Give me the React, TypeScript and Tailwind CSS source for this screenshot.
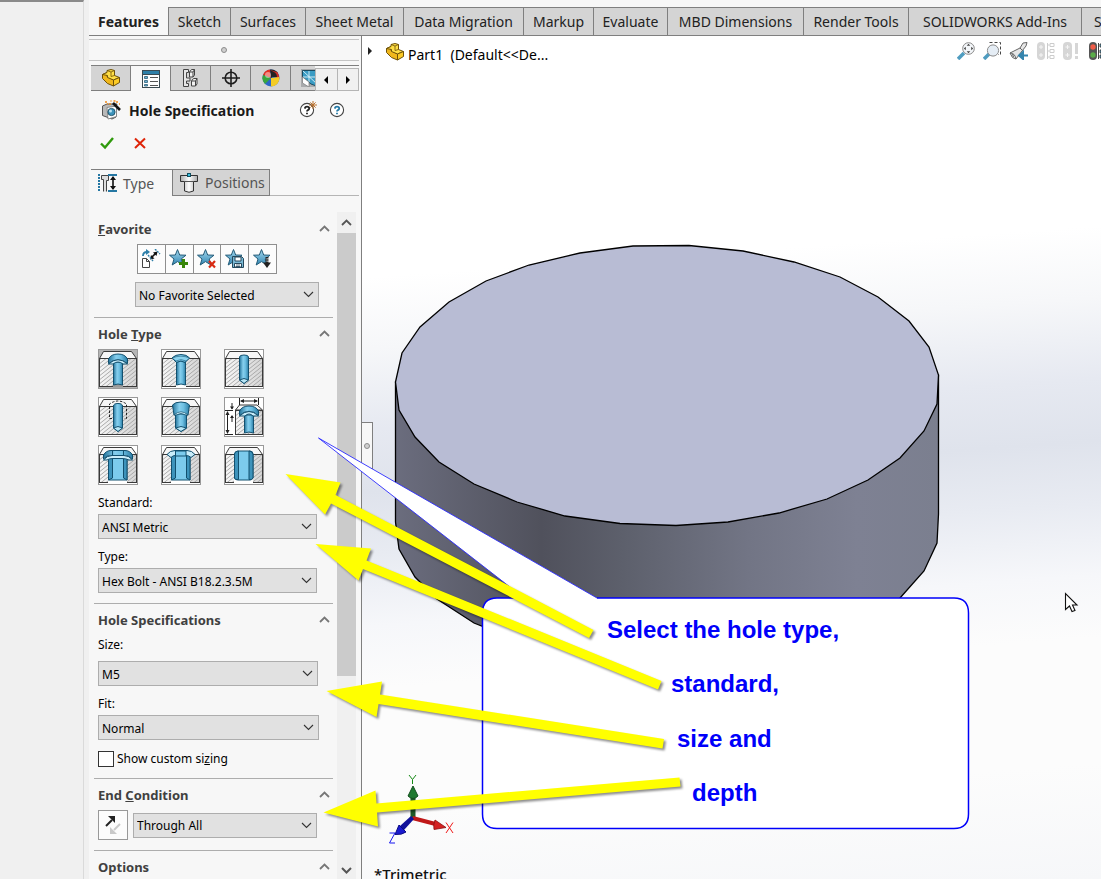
import { useState } from "react";
import type { ReactNode } from "react";

const commandTabs = [
  { label: "Features", width: "w-20" },
  { label: "Sketch", width: "w-[62px]" },
  { label: "Surfaces", width: "w-[75px]" },
  { label: "Sheet Metal", width: "w-[98px]" },
  { label: "Data Migration", width: "w-[120px]" },
  { label: "Markup", width: "w-[70px]" },
  { label: "Evaluate", width: "w-[74px]" },
  { label: "MBD Dimensions", width: "w-[136px]" },
  { label: "Render Tools", width: "w-[105px]" },
  { label: "SOLIDWORKS Add-Ins", width: "w-[173px]" },
];

function PartIcon() {
  return (
    <svg width="18" height="18" viewBox="0 0 18 18" aria-hidden="true">
      <path d="M0.500 5.500 L5 3.500 V7.500 L11.500 11 V17 L5.500 14.500 L0.500 9.500 Z" fill="#f0b71c" stroke="#6f5208" strokeLinejoin="round" />
      <path d="M0.500 5.500 L5 3.500 V1.500 L9 0.500 L12.500 1.500 V6.500 L17.500 8.500 L11.500 11 L5.500 8.500 V6.500 Z" fill="#ffdf45" stroke="#6f5208" strokeLinejoin="round" />
      <path d="M5 1.500 L9 3 L12.500 1.500 M9 3 V7.500 L12.500 6.500" fill="none" stroke="#6f5208" strokeWidth="0.800" />
      <path d="M11.500 11 L17.500 8.500 V13.500 L11.500 17 Z" fill="#fccb25" stroke="#6f5208" strokeLinejoin="round" />
    </svg>
  );
}

function PropertyIcon() {
  return (
    <svg width="18" height="18" viewBox="0 0 18 18" aria-hidden="true">
      <rect x="0.500" y="0.500" width="17" height="17" fill="#fff" stroke="#3a4a52" />
      <rect x="1" y="1" width="16" height="3" fill="#2d7fa8" />
      <path d="M0 4.500H18" stroke="#3a4a52" />
      <path d="M2.500 6.500h3v2h-3zM2.500 10.500h3v2h-3zM2.500 14.500h3v1.500h-3z" fill="#6db3d3" stroke="#2d5f78" strokeWidth="0.800" />
      <path d="M8 7.500h8M8 11.500h8M8 15.500h8" stroke="#555" />
    </svg>
  );
}

function ConfigIcon() {
  return (
    <svg width="18" height="18" viewBox="0 0 18 18" fill="none" stroke="#444" aria-hidden="true">
      <path d="M1.500 0.500 H6.500 V3.500 H4.500 V9 H8 V12 H4.500 V14.500 H6.500 V17.500 H1.500 Z" fill="#e6e6e6" />
      <path d="M7.500 3 L9.500 0.500 H12.500 V6 L11 8 H7.500Z M7.500 3H11V8 M11 3l1.500-2.500" fill="#f2f2f2" />
      <path d="M9.500 12 L11.500 9.500 H15 V15 L13.500 17 H9.500Z M9.500 12H13.500V17 M13.500 12l1.500-2.500" fill="#f2f2f2" />
    </svg>
  );
}

function TargetIcon() {
  return (
    <svg width="18" height="18" viewBox="0 0 18 18" fill="none" stroke="#1d1d1d" strokeWidth="1.600" aria-hidden="true">
      <circle cx="9" cy="9" r="5.800" />
      <path d="M9 0V18M0 9H18" />
    </svg>
  );
}

function BallIcon() {
  return (
    <svg width="18" height="18" viewBox="0 0 18 18" aria-hidden="true">
      <circle cx="9" cy="9" r="8.500" fill="#2c66c8" />
      <path d="M9 9 L1 6 A8.5 8.5 0 0 1 8 0.600 Z" fill="#e33022" />
      <path d="M9 9 L8 0.600 A8.5 8.5 0 0 1 16 4 Z" fill="#222" />
      <path d="M8 1 Q13 3 13 8 L17 10 A8.5 8.5 0 0 0 15 3 Z" fill="#cf2a22" />
      <path d="M9 2 Q15 3 15 8 L11 8Z" fill="#222" />
      <path d="M9 9 L17.400 8 A8.5 8.5 0 0 1 9 17.500 Z" fill="#f4cc25" />
      <path d="M9 9 L1 6 A8.5 8.5 0 0 0 3 15 Z" fill="#38a63d" />
      <circle cx="6" cy="6" r="3" fill="#fff" opacity="0.450" />
    </svg>
  );
}

function BlueprintIcon() {
  return (
    <svg width="18" height="18" viewBox="0 0 18 18" className="shrink-0" aria-hidden="true">
      <rect width="18" height="18" fill="#a9abad" />
      <path d="M1.500 1.500 H18 V18 L10 15 L1.500 8 Z" fill="#3a9cc4" stroke="#1b4b61" />
      <path d="M2 2 L16 15 M8 2 V13 M2 8 H18" stroke="#dff3fa" strokeWidth="0.900" />
      <path d="M1.500 8 L8 13 V18 L1.500 14Z" fill="#fff" stroke="#777" strokeWidth="0.700" />
    </svg>
  );
}

function HoleWizardIcon() {
  return (
    <svg width="20" height="20" viewBox="0 0 20 20" aria-hidden="true">
      <path d="M1.500 6 L6 4 H16 L15 7 V17 L11 19 L1.500 15.500 Z" fill="#b9b9b9" stroke="#555" />
      <path d="M6 7.500 L15.500 6 V16.500 L7 19 Z" fill="#fff" stroke="#777" strokeWidth="0.800" />
      <circle cx="10.500" cy="12" r="3.600" fill="#3c93bb" stroke="#24586f" />
      <circle cx="9.500" cy="11" r="1.500" fill="#b8e2f2" />
      <path d="M12 3 L19 10" stroke="#151515" strokeWidth="2.600" />
      <path d="M4 2h2M8 4h2M12.500 1h2M16 1v2M9.500 1h1M6 4h1M18 4h1" stroke="#f08a1c" strokeWidth="1.500" />
    </svg>
  );
}

function HelpIcon({ starred }: { starred?: boolean }) {
  return (
    <svg width="18" height="18" viewBox="0 0 18 18" className="overflow-visible" aria-hidden="true">
      <circle cx="8" cy="9" r="6.600" fill="#fff" stroke="#444" strokeWidth="1.100" />
      <path d="M5.900 7.600 Q6 5.600 8 5.600 Q10.200 5.600 10.200 7.400 Q10.200 8.400 8.900 9.100 Q8 9.600 8 10.600 M8 11.800 V13.300" fill="none" stroke={starred ? "#222" : "#2579a5"} strokeWidth="1.800" />
      {starred && <path d="M14 0V8M10 4H18M11.400 1.400L16.600 6.600M16.600 1.400L11.400 6.600" stroke="#b9702c" />}
    </svg>
  );
}

function TypeTabIcon() {
  return (
    <svg width="20" height="20" viewBox="0 0 20 20" aria-hidden="true">
      <path d="M2 1 V19" stroke="#2577a3" strokeWidth="2" strokeDasharray="2 1" />
      <path d="M6.500 18.500 V6.500 H4.500 V2.500 H11.500 V7.500 H9.500 V18.500" fill="#ddd" stroke="#444" />
      <path d="M11 2 H20 M11 18 H20" stroke="#2577a3" strokeWidth="2" />
      <path d="M16 4 V16" stroke="#111" strokeWidth="1.600" />
      <path d="M13 7 L16 3 L19 7Z M13 13 L16 17 L19 13Z" fill="#111" />
    </svg>
  );
}

function PositionsTabIcon() {
  return (
    <svg width="20" height="20" viewBox="0 0 20 20" aria-hidden="true">
      <path d="M1.500 2.500 H18.500 V8.500 H14.500 V18 Q10 20.500 5.500 18 V8.500 H1.500 Z" fill="url(#metal)" stroke="#333" />
      <path d="M5.500 8.500 H14.500" stroke="#555" />
      <rect x="8.500" y="0.500" width="3" height="3" fill="#3cc0dc" stroke="#124e60" />
    </svg>
  );
}

function FavoriteIcon({ kind }: { kind: "apply" | "add" | "delete" | "save" | "load" }) {
  if (kind === "apply") {
    return (
      <svg width="20" height="20" viewBox="0 0 20 20" aria-hidden="true">
        <path d="M1.500 9.500 H5.500 L8.500 12.500 V18.500 H1.500 Z M5.500 9.500 V12.500 H8.500" fill="#fff" stroke="#444" />
        <path d="M2 7 Q2 3 6 3" fill="none" stroke="#2e7fa9" strokeWidth="1.800" />
        <path d="M5 0 L9 3 L5 6Z" fill="#2e7fa9" />
        <path d="M10 9 L15 4" stroke="#111" strokeWidth="1.600" />
        <path d="M9 10.500 L10 6 L13.500 9.500Z M16.500 2.500 L12 3.500 L15.500 7Z" fill="#111" />
        <path d="M7 6 L12 12 M14 0 L19 5" stroke="#2e7fa9" strokeWidth="1.400" strokeDasharray="2 1" />
      </svg>
    );
  }
  return (
    <svg width="20" height="20" viewBox="0 0 20 20" aria-hidden="true">
      <path d="M8.500 0.500 L10.700 6 L17 6.200 L12.200 10 L14 16 L8.500 12.600 L3.200 16 L5 10 L0.500 6.200 L6.300 6 Z" fill="url(#star)" stroke="#235b78" strokeWidth="1" />
      {kind === "add" && <path d="M14.500 10 V19 M10 14.500 H19" stroke="#38860a" strokeWidth="3" />}
      {kind === "delete" && <path d="M12 12 L18 18.500 M18 12 L12 18.500" stroke="#d92a12" strokeWidth="2.200" />}
      {kind === "save" && (
        <g>
          <path d="M7.500 7.500 H16.500 L18.500 9.500 V18.500 H7.500 Z" fill="#7ab9d5" stroke="#26485c" />
          <path d="M10 8 H16 V12 H10Z M9.500 14.500 H16.500 V18 H9.500Z" fill="#fff" stroke="#26485c" />
          <path d="M11 16h4M11 17.500h4" stroke="#26485c" strokeWidth="0.800" />
        </g>
      )}
      {kind === "load" && (
        <g>
          <path d="M14 8 V14" stroke="#222" strokeWidth="3" strokeDasharray="1.5 0.800" />
          <path d="M10 13.500 H18 L14 19Z" fill="#222" />
        </g>
      )}
    </svg>
  );
}

type HoleKind = "cbore" | "csink" | "hole" | "tap" | "pipe" | "legacy" | "cboreSlot" | "csinkSlot" | "slot";

const holeKinds: { kind: HoleKind; label: string }[] = [
  { kind: "cbore", label: "Counterbore" },
  { kind: "csink", label: "Countersink" },
  { kind: "hole", label: "Hole" },
  { kind: "tap", label: "Straight Tap" },
  { kind: "pipe", label: "Tapered Tap" },
  { kind: "legacy", label: "Legacy Hole" },
  { kind: "cboreSlot", label: "Counterbore Slot" },
  { kind: "csinkSlot", label: "Countersink Slot" },
  { kind: "slot", label: "Slot" },
];

function Block() {
  return (
    <g>
      <path d="M1.500 9.500 L5.500 2.500 H33.500 L38.500 9.500 Z" fill="#f7f7f7" stroke="#3a3a3a" />
      <rect x="1.500" y="9.500" width="37" height="28" fill="url(#steel)" stroke="none" />
      <rect x="1.500" y="9.500" width="37" height="28" fill="url(#hatch)" stroke="#3a3a3a" />
    </g>
  );
}

function HoleShape({ kind }: { kind: HoleKind }) {
  const edge = "#12506f";
  switch (kind) {
    case "cbore":
      return (
        <g stroke={edge}>
          <Block />
          <path d="M15 38.500 V36 Q19.500 33 25 36 V38.500Z" fill="#9a9a9a" stroke="none" />
          <path d="M15.500 13 H24.500 V36 Q20 34 15.500 36Z" fill="url(#bore)" />
          <path d="M10.500 14.500 V10 Q13 5 20 5 T29.500 10 V14.500 Q20 7 10.500 14.500Z" fill="url(#bore)" />
          <path d="M10.500 15 Q20 6.500 29.500 15 L25 15 Q20 11 15 15Z" fill="#c9edfa" />
        </g>
      );
    case "csink":
      return (
        <g stroke={edge}>
          <Block />
          <path d="M15 38.500 V36 Q19.500 33 25 36 V38.500Z" fill="#fff" stroke="none" />
          <path d="M15.500 12 H24.500 V36 Q20 34 15.500 36Z" fill="url(#bore)" />
          <path d="M11 9 Q14 5.500 20 5.500 T28.500 9 L24 13.500 Q20 10.500 15.500 13.500Z" fill="url(#bore)" />
          <path d="M11 9 Q20 5.500 28.500 9 L25 12 Q20 9 15 12Z" fill="#8bd3ef" strokeWidth="0.500" />
        </g>
      );
    case "hole":
      return (
        <g stroke={edge}>
          <Block />
          <path d="M15.500 8 Q15.500 6 20 6 T24.500 8 V31 L20 34.500 L15.500 31Z" fill="url(#bore)" />
          <path d="M15.500 31 Q20 28 24.500 31 L20 34.500Z" fill="#b8e6f6" />
        </g>
      );
    case "tap":
      return (
        <g stroke={edge}>
          <Block />
          <path d="M15.500 9 Q15.500 6.500 20 6.500 T24.500 9 V31 L20 34.500 L15.500 31Z" fill="url(#bore)" />
          <path d="M15.500 31 Q20 28 24.500 31 L20 34.500Z" fill="#b8e6f6" />
          <path d="M14 21.500 H11.500 V7 Q20 1 28.500 7 V21.500 H26" fill="none" stroke="#222" strokeDasharray="2.500 1.500" />
        </g>
      );
    case "pipe":
      return (
        <g stroke={edge}>
          <Block />
          <path d="M14.500 17 H25.500 V31 L20 34.500 L14.500 31Z" fill="url(#bore)" />
          <path d="M14.500 31 Q20 28 25.500 31 L20 34.500Z" fill="#b8e6f6" />
          <path d="M11.500 8 Q14 5 20 5 T28.500 8 L27 18 Q20 14 13 18Z" fill="url(#bore)" />
          <path d="M13 18 Q20 11.500 27 18 L25 18 Q20 15 15 18Z" fill="#c9edfa" strokeWidth="0.700" />
        </g>
      );
    case "legacy":
      return (
        <g stroke={edge}>
          <path d="M11.500 13 L15.500 8 H33 L38.500 13Z" fill="#f7f7f7" stroke="#3a3a3a" />
          <rect x="11.500" y="13.500" width="27" height="24" fill="url(#steel)" stroke="none" />
          <rect x="11.500" y="13.500" width="27" height="24" fill="url(#hatch)" stroke="#3a3a3a" />
          <path d="M20.500 18 H29.500 V36 Q25 34 20.500 36Z" fill="url(#bore)" />
          <path d="M15.500 18.500 V14 Q18 9 25 9 T34.500 14 V18.500 Q25 10 15.500 18.500Z" fill="url(#bore)" />
          <path d="M15.500 19 Q25 10 34.500 19 H29 Q25 15 21 19Z" fill="#c9edfa" />
          <path d="M15.500 1 V8 M34.500 1 V8 M17 4 H33 M1 13.500 H9 M1 37.500 H9 M3.500 16 V35 M8 6 V12 M8 19 V25" stroke="#222" fill="none" />
          <path d="M16 4l4-2v4zM34 4l-4-2v4zM3.500 14l-2 4h4zM3.500 37l-2-4h4zM8 12.500l-2-3h4zM8 18l-2 3h4z" fill="#222" stroke="none" />
        </g>
      );
    case "cboreSlot":
      return (
        <g stroke={edge}>
          <Block />
          <rect x="10" y="35" width="19" height="4" fill="#fff" stroke="none" />
          <path d="M10.500 12 H29 V35 H10.500Z" fill="#7ccbed" />
          <path d="M10.500 12 H14.500 V33 L10.500 35Z M29 12 H25.500 V33 L29 35Z" fill="#3d93bb" />
          <path d="M5.500 14 V10 Q8 5.500 13 5.500 H27 Q32 5.500 34.500 10 V14 Q30 10 26 10.500 H14 Q9 10 5.500 14Z" fill="url(#bore)" />
          <path d="M5.500 15 Q9 10.500 14 10.500 H26 Q31 10.500 34.500 15 H31 Q28 13.500 24 13.500 H15 Q11 13.500 9 15Z" fill="#c9edfa" />
          <path d="M14.500 6 V11 M25.500 6 V11" />
        </g>
      );
    case "csinkSlot":
      return (
        <g stroke={edge}>
          <Block />
          <rect x="10" y="35" width="19" height="4" fill="#fff" stroke="none" />
          <path d="M10.500 10 H29 V35 H10.500Z" fill="#7ccbed" />
          <path d="M10.500 10 H14.500 V33 L10.500 35Z M29 10 H25.500 V33 L29 35Z" fill="#3d93bb" />
          <path d="M6 9.500 Q9 5.500 14 5.500 H26 Q31 5.500 34 9.500 L30 12.500 Q28 10.500 25 10.500 H14 Q12 10.500 10 12.500Z" fill="#c9edfa" />
          <path d="M14.500 6 H25 V11 H14.500Z" fill="#7ccbed" />
        </g>
      );
    default:
      return (
        <g stroke={edge}>
          <Block />
          <rect x="10" y="35" width="19" height="4" fill="#fff" stroke="none" />
          <path d="M10.500 9 Q11 6 14 6 H26 Q29 6 29 9 V33 Q28 35 26 35 H14 Q11 35 10.500 33Z" fill="#7ccbed" />
          <path d="M10.500 9 Q11 6 14.500 6 V34.500 Q11 35 10.500 33Z M29 9 Q28 6 25 6 V34.500 Q28 35 29 33Z" fill="#3d93bb" />
        </g>
      );
  }
}

function Chevron({ dir, className }: { dir: "up" | "down"; className?: string }) {
  return (
    <svg width="11" height="7" viewBox="0 0 11 7" fill="none" className={className} aria-hidden="true">
      <path d={dir === "up" ? "M1 6L5.500 1.500L10 6" : "M1 1L5.500 5.500L10 1"} stroke="currentColor" strokeWidth={dir === "up" ? "1.8" : "1.1"} />
    </svg>
  );
}

function Dropdown({ id, label, value, className }: { id: string; label?: string; value: string; className: string }) {
  return (
    <div className={`relative ${className}`}>
      <select
        id={id}
        aria-label={label}
        className="block h-[25px] w-full appearance-none border border-[#adadad] bg-[#e1e1e1] pl-[3px] pr-6 pt-[2px] text-[12px] text-black"
      >
        <option>{value}</option>
      </select>
      <Chevron dir="down" className="pointer-events-none absolute right-[5px] top-[9px] text-[#333]" />
    </div>
  );
}

function Group({ title, children, className = "" }: { title: ReactNode; children?: ReactNode; className?: string }) {
  const [open, setOpen] = useState(true);
  return (
    <section className={`border-[#adadad] pl-1 ${className}`}>
      <button
        type="button"
        aria-expanded={open}
        onClick={() => setOpen(!open)}
        className="flex h-6 w-full items-center justify-between pr-[3px] text-[13px] font-bold text-[#404040]"
      >
        <span>{title}</span>
        <Chevron dir="up" className="mb-1 text-[#777]" />
      </button>
      {open && children}
    </section>
  );
}

function ManagerTabs() {
  const tabs = [
    { name: "Feature tree", icon: <PartIcon /> },
    { name: "Properties", icon: <PropertyIcon /> },
    { name: "Configurations", icon: <ConfigIcon /> },
    { name: "Dimension expert", icon: <TargetIcon /> },
    { name: "Display", icon: <BallIcon /> },
  ];
  return (
    <div className="mx-[2px] mt-1 flex h-[26px] border-t border-[#7f7f7f]">
      {tabs.map((tab, i) => (
        <button
          key={tab.name}
          type="button"
          aria-label={tab.name}
          className={`flex w-10 shrink-0 items-center justify-center border-r border-[#7f7f7f] ${i === 1 ? "bg-[#f7f7f7]" : "border-b bg-[#d4d4d4]"}`}
        >
          {tab.icon}
        </button>
      ))}
      <button type="button" aria-label="Drawings" className="flex w-6 shrink-0 items-center overflow-hidden border-b border-[#7f7f7f] bg-[#d4d4d4] pl-[10px]">
        <BlueprintIcon />
      </button>
      <button type="button" aria-label="Previous tabs" className="mt-[2px] flex min-w-0 flex-1 items-center justify-center border border-[#b5b5b5] bg-[#f0f0f0]">
        <svg width="6" height="8" viewBox="0 0 6 8"><path d="M5 0V8L1 4Z" /></svg>
      </button>
      <button type="button" aria-label="Next tabs" className="mt-[2px] flex min-w-0 flex-1 items-center justify-center border border-l-0 border-[#b5b5b5] bg-[#f0f0f0]">
        <svg width="6" height="8" viewBox="0 0 6 8"><path d="M1 0V8L5 4Z" /></svg>
      </button>
    </div>
  );
}

function PropertyPanel() {
  return (
    <aside className="flex w-[272px] shrink-0 flex-col bg-[#f7f7f7]">
      <div className="mt-[3px] mr-[2px] flex h-[22px] items-center justify-center border-y border-[#c4c4c4]">
        <span className="size-[6px] rounded-full border border-[#8c8c8c] bg-[#d0d0d0]" />
      </div>
      <ManagerTabs />
      <header className="flex h-[38px] items-center pl-3 pr-[14px]">
        <HoleWizardIcon />
        <h1 className="ml-2 flex-1 text-[14px] font-bold text-[#1a1a1a]">Hole Specification</h1>
        <div className="flex gap-3">
          <button type="button" aria-label="What's new"><HelpIcon starred /></button>
          <button type="button" aria-label="Help"><HelpIcon /></button>
        </div>
      </header>
      <div className="flex h-10 items-start gap-5 pl-[11px] pt-[7px]">
        <button type="button" aria-label="OK">
          <svg width="14" height="14" viewBox="0 0 14 14" fill="none"><path d="M1 7.500L5 11.500L13 2" stroke="#2f9a0c" strokeWidth="2.400" /></svg>
        </button>
        <button type="button" aria-label="Cancel">
          <svg width="12" height="14" viewBox="0 0 12 14" fill="none"><path d="M1 2.500L11 12M11 2.500L1 12" stroke="#de2408" strokeWidth="2" /></svg>
        </button>
      </div>
      <div className="ml-[2px] mr-[2px] flex h-[27px] text-[14px] text-[#555]">
        <button type="button" className="flex w-[81px] items-center gap-[6px] border-t border-[#7f7f7f] pl-[6px]">
          <TypeTabIcon />
          <span>Type</span>
        </button>
        <button type="button" className="flex w-[98px] items-center gap-[6px] border border-[#7f7f7f] bg-[#d4d4d4] pl-[6px]">
          <PositionsTabIcon />
          <span>Positions</span>
        </button>
        <span className="flex-1 border-b border-[#b5b5b5]" />
      </div>
      <div className="mt-4 flex min-h-0 flex-1">
        <div className="ml-[5px] w-[239px] overflow-hidden pt-[6px]">
          <Group title={<><u>F</u>avorite</>} className="h-[99px]">
            <div className="ml-[39px] mt-[2px] flex w-[140px] border border-[#8f8f8f]">
              {(["apply", "add", "delete", "save", "load"] as const).map((kind, i) => (
                <button
                  key={kind}
                  type="button"
                  aria-label={`${kind} favorite`}
                  className={`flex h-7 flex-1 items-center justify-center bg-[#fcfcfc] ${i > 0 ? "border-l border-[#8f8f8f]" : ""}`}
                >
                  <FavoriteIcon kind={kind} />
                </button>
              ))}
            </div>
            <Dropdown id="favorite" label="Favorite" value="No Favorite Selected" className="ml-[37px] mt-2 w-[184px]" />
          </Group>

          <Group title={<>Hole <u>T</u>ype</>} className="h-[286px] border-t pt-[5px]">
            <div className="mt-[2px] grid grid-cols-[40px_40px_40px] gap-x-[23px] gap-y-2">
              {holeKinds.map(({ kind, label }) => (
                <button key={kind} type="button" aria-label={label} className={`size-10 border border-[#999] ${kind === "cbore" ? "bg-[#b5b5b5]" : "bg-white"}`}>
                  <svg viewBox="1 1 38 38" className="size-full" aria-hidden="true">
                    <HoleShape kind={kind} />
                  </svg>
                </button>
              ))}
            </div>
            <label htmlFor="standard" className="mt-2 block h-[21px] text-[12px] leading-5">Standard:</label>
            <Dropdown id="standard" value="ANSI Metric" className="w-[219px]" />
            <label htmlFor="type" className="mt-2 block h-[21px] text-[12px] leading-5">Type:</label>
            <Dropdown id="type" value="Hex Bolt - ANSI B18.2.3.5M" className="w-[219px]" />
          </Group>

          <Group title="Hole Specifications" className="h-[175px] border-t pt-[5px]">
            <label htmlFor="size" className="mt-[2px] block h-[26px] text-[12px] leading-5">Size:</label>
            <Dropdown id="size" value="M5" className="w-[220px]" />
            <label htmlFor="fit" className="mt-2 block h-[21px] text-[12px] leading-5">Fit:</label>
            <Dropdown id="fit" value="Normal" className="w-[221px]" />
            <label className="mt-2 flex h-[22px] items-center gap-[3px] text-[12px]">
              <input type="checkbox" className="size-4 appearance-none border border-[#333] bg-white checked:bg-[#333]" />
              <span>Show custom si<u>z</u>ing</span>
            </label>
          </Group>

          <Group title={<>End <u>C</u>ondition</>} className="h-[72px] border-t pt-[5px]">
            <div className="mt-[2px] flex items-center gap-[5px]">
              <button type="button" aria-label="Reverse direction" className="flex size-[30px] items-center justify-center border border-[#999] bg-[#fcfcfc]">
                <svg width="20" height="20" viewBox="0 0 20 20">
                  <path d="M3 11 L9 5" stroke="#222" strokeWidth="2" />
                  <path d="M5 1 H12 V8Z" fill="#222" />
                  <path d="M17 9 L11 15" stroke="#c9c9c9" strokeWidth="2" />
                  <path d="M7 12 V19 H14Z" fill="#c9c9c9" />
                </svg>
              </button>
              <Dropdown id="end" label="End condition" value="Through All" className="w-[184px]" />
            </div>
          </Group>

          <Group title="Options" className="border-t pt-[5px]" />
        </div>
        <div className="ml-1 flex w-[19px] flex-col items-center bg-[#f0f0f0]">
          <div className="flex h-[21px] items-center"><Chevron dir="up" className="text-[#555]" /></div>
          <div className="h-[443px] w-full bg-[#cbcbcb]" />
          <div className="mt-auto flex h-[18px] items-center">
            <svg width="11" height="7" viewBox="0 0 11 7" fill="none"><path d="M1 1L5.500 5.500L10 1" stroke="#555" strokeWidth="2" /></svg>
          </div>
        </div>
      </div>
    </aside>
  );
}

function ViewIcons() {
  return (
    <div className="flex gap-2">
      <svg width="18" height="18" viewBox="0 0 18 18">
        <path d="M1 17 L7 11" stroke="#4f9cc0" strokeWidth="3.500" />
        <circle cx="11.500" cy="6.500" r="5.800" fill="#f4f7fa" stroke="#888" />
        <path d="M11.500 1.800l1.800 2h-3.600zM11.500 11.200l1.800-2h-3.600zM6.800 6.500l2-1.800v3.600zM16.200 6.500l-2-1.800v3.600z" fill="#444" />
      </svg>
      <svg width="18" height="18" viewBox="0 0 18 18">
        <path d="M1 17 L6 12" stroke="#4f9cc0" strokeWidth="3.500" />
        <path d="M6.500 0.500 H17.500 V12.500 H15" fill="none" stroke="#444" strokeDasharray="3 2" />
        <circle cx="10" cy="8.500" r="5.600" fill="#e5edf5" stroke="#8b8b8b" />
      </svg>
      <svg width="20" height="18" viewBox="0 0 20 18">
        <path d="M1 11 L11 6 L14 1 L18 0.500 L17 4 L13 9 L7 17 Q3 17 1 11Z" fill="#e6e6e6" stroke="#666" />
        <path d="M1 11 Q6 11 7 17 M3.500 12 L4.500 15 M11 6 L13.500 8.500" fill="none" stroke="#666" />
        <path d="M19 13.500 H13 M14 10 L10 13.500 L14 17Z" fill="#3484ad" stroke="#3484ad" strokeWidth="2" />
      </svg>
      <svg width="18" height="18" viewBox="0 0 18 18">
        <rect x="0" y="0" width="8" height="18" rx="4" fill="#d6d6d6" />
        <path d="M4 3v4M2 5h4M4 11v4M2 13h4" stroke="#f5f5f5" />
        <path d="M10.500 1v16M13 1.500h4v3h-4zM13 7.500h4v3h-4zM13 13.500h4v3h-4zM10.500 3h2M10.500 9h2M10.500 15h2" fill="none" stroke="#ccc" />
      </svg>
      <svg width="18" height="18" viewBox="0 0 18 18">
        <rect x="0" y="0" width="9" height="18" rx="4" fill="#d6d6d6" />
        <path d="M4.500 3v4M2.500 5h4M4.500 11v4M2.500 13h4" stroke="#f5f5f5" />
        <path d="M12 1h3v11h-3zM12 14h3v3h-3z" fill="#d6d6d6" />
      </svg>
      <svg width="18" height="18" viewBox="0 0 18 18">
        <rect x="0" y="0" width="8" height="18" rx="4" fill="#555" />
        <circle cx="4" cy="5" r="2.700" fill="#f05c48" />
        <circle cx="4" cy="13" r="2.700" fill="#5aab48" />
        <path d="M9.500 1v16" stroke="#444" />
        <path d="M11 2h6v3h-6zM11 8h6v3h-6zM11 13h6v3h-6z" fill="#3f8db3" stroke="#444" />
      </svg>
    </div>
  );
}

const topFace =
  "395.500,382 402,353 420,327 449,302 486,281 529,265 580,253 633,246 689,245.500 743,251 794,262 840,277 878,297 909,321 929,347 938.500,375 937,404 924,431 900,458 868,480 827,499 779,513 728,522 676,525.500 620,523.500 565,516 517,502 474,484 439,462 415,437 399,410";

function Scene() {
  return (
    <svg width="739" height="843" viewBox="362 36 739 843" className="absolute left-0 top-0" aria-hidden="true">
      <defs>
        <linearGradient id="side" gradientUnits="userSpaceOnUse" x1="395" y1="0" x2="939" y2="0">
          <stop offset="0" stopColor="#6b6d7e" />
          <stop offset="0.270" stopColor="#50515c" />
          <stop offset="0.420" stopColor="#5d606c" />
          <stop offset="0.650" stopColor="#727585" />
          <stop offset="0.850" stopColor="#7e8193" />
          <stop offset="1" stopColor="#7b7f8f" />
        </linearGradient>
        <linearGradient id="bore">
          <stop offset="0" stopColor="#24749b" />
          <stop offset="0.400" stopColor="#86cfee" />
          <stop offset="0.650" stopColor="#6dbfe2" />
          <stop offset="1" stopColor="#2c7ea6" />
        </linearGradient>
        <linearGradient id="steel">
          <stop offset="0" stopColor="#f6f6f6" />
          <stop offset="1" stopColor="#d6d6d6" />
        </linearGradient>
        <linearGradient id="metal">
          <stop offset="0" stopColor="#aaa" />
          <stop offset="0.500" stopColor="#fff" />
          <stop offset="1" stopColor="#aaa" />
        </linearGradient>
        <linearGradient id="star" x2="0" y2="1">
          <stop offset="0" stopColor="#a5d8ee" />
          <stop offset="1" stopColor="#2f86b3" />
        </linearGradient>
        <pattern id="hatch" width="5" height="4" patternUnits="userSpaceOnUse">
          <path d="M-1.250 5L6.250 -1M-1.250 1L1.250 -1M3.750 5L6.250 3" stroke="#a3a3a3" strokeWidth="0.900" />
        </pattern>
      </defs>
      <path
        d="M395.500 382 V522 L399 549 L415 577 L437 599 L474 623 L517 640 H860 L900 598 L924 571 L937 543 L938.500 514 V375 L700 300 Z"
        fill="url(#side)"
        stroke="#000"
        strokeWidth="1.300"
      />
      <polygon points={topFace} fill="#b8bcd4" stroke="#000" strokeWidth="1.300" />

      <path d="M410.500 796 H415.500 V818 H410.500Z" fill="#1f5a28" />
      <path d="M413 786 L418 796 Q413 801 408 796Z" fill="#1f7a30" stroke="#134f1e" />
      <path d="M413 816 L436 822 L435 826 L412 820Z" fill="#c01818" />
      <path d="M446 827.500 L435 820 Q433 825 434 829.500Z" fill="#d42222" stroke="#8a1010" strokeWidth="0.800" />
      <path d="M414 819 L411 816 L400 826 L404 830Z" fill="#12129a" />
      <path d="M395 834.500 L399 825 L406 832 Q402 835 395 834.500Z" fill="#1a1ad0" stroke="#0b0b80" />
      <path d="M409 775 L412.500 779.500 L416 775 M412.500 779.500 V784" fill="none" stroke="#168a16" />
      <path d="M446 822.500 L453 833 M453 822.500 L446 833" fill="none" stroke="#f01818" />
      <path d="M389.500 833 H395 L389.500 843 H395" fill="none" stroke="#1616f0" />

      <path d="M1065.500 593.500 V609.500 L1069.500 606 L1072 611.500 L1075 610.500 L1072.500 605 H1077 Z" fill="#fff" stroke="#111" strokeWidth="1.100" />
    </svg>
  );
}

function Viewport() {
  return (
    <main className="relative min-w-0 flex-1 overflow-hidden border-l border-[#7f7f7f] bg-[linear-gradient(176deg,#ffffff_0%,#ffffff_27%,#f6f7f9_35%,#e6e9f1_44%,#dfe3ec_51%,#e8ebf2_58%,#f6f7fa_66%,#fcfcfc_73%,#fcfcfc_87%,#f6f7f9_100%)]">
      <Scene />
      <div className="absolute -left-px top-[386px] flex h-[47px] w-3 items-center justify-center border border-l-0 border-[#7f7f7f] bg-[#f7f7f7]">
        <span className="size-[6px] rounded-full border border-[#8c8c8c] bg-[#d0d0d0]" />
      </div>
      <div className="relative flex h-9 items-center pl-[6px]">
        <svg width="4" height="8" viewBox="0 0 4 8" className="mb-[6px]"><path d="M0 0L4 4L0 8Z" fill="#222" /></svg>
        <span className="ml-[14px] pb-1"><PartIcon /></span>
        <span className="ml-1 flex-1 whitespace-pre text-[14px] text-black">{"Part1  (Default<<De..."}</span>
        <div className="-mr-[6px] shrink-0 pb-[6px]"><ViewIcons /></div>
      </div>
      <p className="absolute left-3 top-[826px] text-[15px] leading-6 font-medium text-[#111]">*Trimetric</p>
    </main>
  );
}

const calloutLines = [
  { text: "Select the hole type,", place: "left-[607px] top-[616px]" },
  { text: "standard,", place: "left-[671px] top-[670px]" },
  { text: "size and", place: "left-[677px] top-[725px]" },
  { text: "depth", place: "left-[692px] top-[779px]" },
];

function Annotations() {
  return (
    <div className="pointer-events-none absolute left-0 top-0 h-[879px] w-[1101px]">
      <svg width="1101" height="879" viewBox="0 0 1101 879" className="absolute left-0 top-0" aria-hidden="true">
        <path
          d="M497 598 H524 L318.500 438 L597 598 H954 Q968.500 598 968.500 613 V814 Q968.500 828.500 954 828.500 H497 Q482.500 828.500 482.500 814 V613 Q482.500 598 497 598Z"
          fill="#fff"
        />
        <path d="M524 598 L318.500 438 L597 598" fill="none" stroke="#2a2aff" strokeWidth="0.900" />
        <path
          d="M597 598 H954 Q968.500 598 968.500 613 V814 Q968.500 828.500 954 828.500 H497 Q482.500 828.500 482.500 814 V613 Q482.500 598 497 598 H524"
          fill="none"
          stroke="#0000fa"
          strokeWidth="1.500"
        />
      </svg>
      {calloutLines.map(({ text, place }) => (
        <p key={text} className={`absolute whitespace-nowrap font-['Liberation_Sans',sans-serif] text-[24px] leading-7 font-bold text-[#0000fa] ${place}`}>
          {text}
        </p>
      ))}
      <svg width="1101" height="879" viewBox="0 0 1101 879" className="absolute left-0 top-0 drop-shadow-[2px_2px_1px_rgba(0,0,0,0.45)]" fill="#ffff00" aria-hidden="true">
        <path d="M285.500 474 L340.500 482.500 L335.500 495 L593.500 630 L589 638 L331 503.500 L325 514.500Z" />
        <path d="M315.500 544 L371 548.500 L366.500 560.500 L661.500 681 L658 689.500 L363 569 L358.500 580.500Z" />
        <path d="M326.500 691 L382 681.500 L380 694.500 L664 739 L662.500 748.500 L378.500 704 L376.500 717Z" />
        <path d="M323.500 812.500 L375.500 790.500 L376.500 803.500 L679.500 777.500 L680.500 786.500 L377 812.500 L378 826.500Z" />
      </svg>
    </div>
  );
}

export default function App() {
  return (
    <div className="relative flex h-screen overflow-hidden bg-[#f0f0f0] font-['Noto_Sans','Open_Sans',sans-serif] text-black">
      <div className="w-[84px] shrink-0 border-r border-[#dadada] border-t-2 border-t-[#8a8a8a] bg-[#f0f0f0]" />
      <div className="ml-[5px] flex min-w-0 flex-1 flex-col bg-[#f7f7f7] pt-[7px]">
        <nav className="flex h-[29px] shrink-0 overflow-hidden border-b border-[#7f7f7f] bg-[#f7f7f7]">
          {commandTabs.map((tab, i) => (
            <button
              key={tab.label}
              type="button"
              className={`shrink-0 whitespace-nowrap border-r border-[#7f7f7f] text-[14px] text-[#222] ${tab.width} ${i === 0 ? "bg-[#f7f7f7] font-bold" : "border-t bg-[#d4d4d4]"}`}
            >
              {tab.label}
            </button>
          ))}
          <button type="button" className="min-w-5 flex-1 border-t border-[#7f7f7f] bg-[#d4d4d4] pl-3 text-left text-[14px] text-[#222]">S</button>
        </nav>
        <div className="flex min-h-0 flex-1">
          <PropertyPanel />
          <Viewport />
        </div>
      </div>
      <Annotations />
    </div>
  );
}
